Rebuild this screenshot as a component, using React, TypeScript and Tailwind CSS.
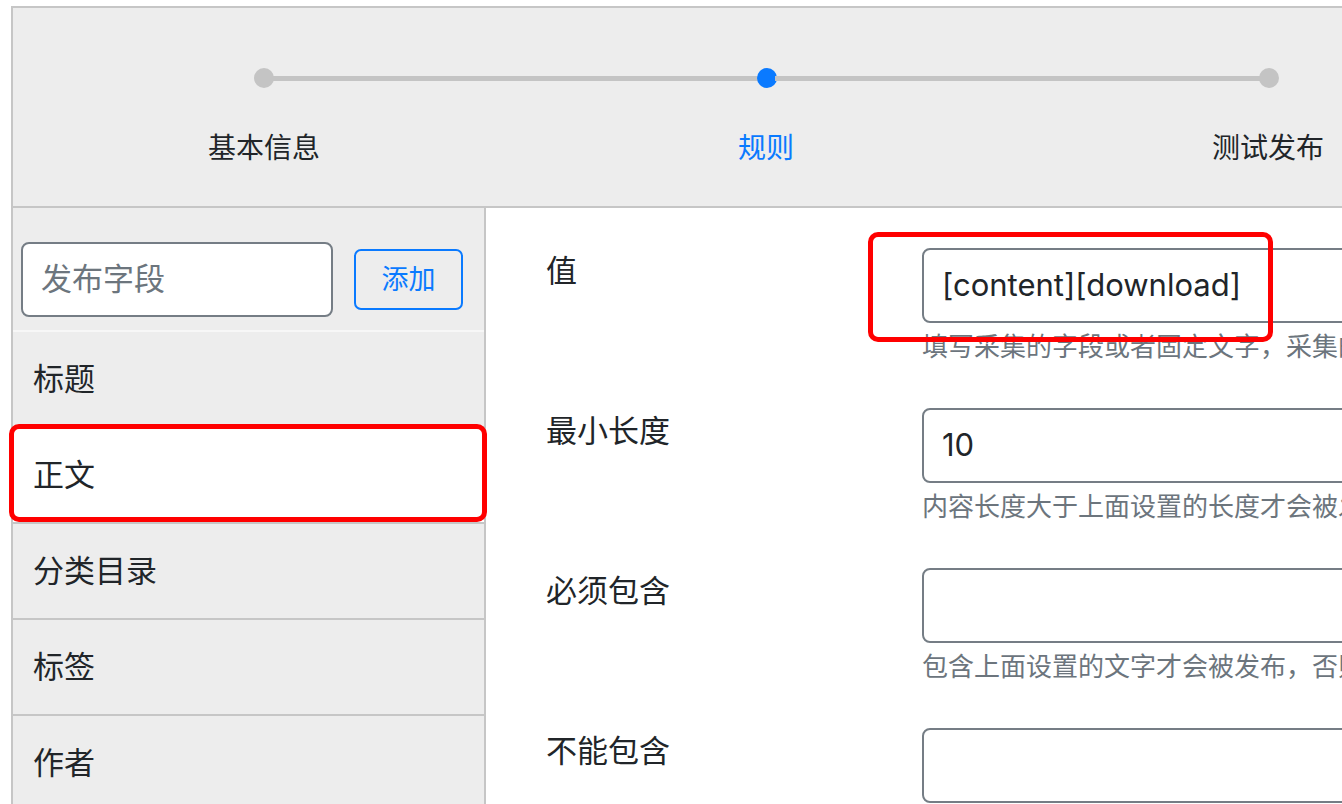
const steps = [
  { label: '基本信息', active: false },
  { label: '规则', active: true },
  { label: '测试发布', active: false },
]

const fields = ['标题', '正文', '分类目录', '标签', '作者']

const rules = [
  { label: '值', value: '[content][download]', help: '填写采集的字段或者固定文字，采集的字段需要用中括号括起来' },
  { label: '最小长度', value: '10', help: '内容长度大于上面设置的长度才会被发布，否则跳过' },
  { label: '必须包含', value: '', help: '包含上面设置的文字才会被发布，否则跳过' },
  { label: '不能包含', value: '', help: '包含上面设置的文字不会被发布' },
]

function Stepper() {
  return (
    <div className="h-[200px] border-b-2 border-[#c6c6c6] bg-[#ededed]">
      {/* Dots and track */}
      <div className="pt-[60px] ml-[241px] w-[1025px] flex items-center">
        {steps.map((s, i) => (
          <div key={s.label} className={`flex items-center ${i < steps.length - 1 ? 'flex-1' : ''}`}>
            <span
              className={`w-[20px] h-[20px] rounded-full shrink-0 ${s.active ? 'bg-[#0a7aff]' : 'bg-[#c4c4c4]'}`}
            />
            {i < steps.length - 1 && <span className="flex-1 h-[5px] bg-[#c4c4c4] -mx-[2px]" />}
          </div>
        ))}
      </div>
      {/* Labels */}
      <div className="mt-[40px] grid grid-cols-[502px_502px_502px]">
        {steps.map((s) => (
          <div
            key={s.label}
            className={`text-center text-[28px] leading-[40px] ${s.active ? 'text-[#0a7aff]' : 'text-[#212529]'}`}
          >
            {s.label}
          </div>
        ))}
      </div>
    </div>
  )
}

function Sidebar() {
  return (
    <div className="w-[473px] shrink-0 bg-[#ededed] border-r-2 border-[#c6c6c6]">
      <div className="pt-[34px] pb-[13px] pl-[8px] flex items-center border-b-2 border-[#f7f7f7]">
        <div className="w-[312px] h-[75px] rounded-[8px] border-2 border-[#757d85] bg-white flex items-center pl-[18px] text-[31px] text-[#6c757d]">
          发布字段
        </div>
        <button className="ml-[21px] w-[109px] h-[61px] rounded-[7px] border-2 border-[#0a7aff] text-[#0a7aff] text-[27px] leading-none">
          添加
        </button>
      </div>
      {fields.map((f) => (
        <div
          key={f}
          className={`h-[96px] border-b-2 border-[#c6c6c6] pl-[20px] flex items-center text-[31px] text-[#212529] ${
            f === '正文' ? 'bg-white' : ''
          }`}
        >
          {f}
        </div>
      ))}
    </div>
  )
}

function RuleForm() {
  return (
    <div className="flex-1 bg-white pl-[60px] pt-[40px]">
      {rules.map((r) => (
        <div key={r.label} className="flex mb-[43px]">
          <div className="w-[376px] shrink-0 text-[31px] leading-[46px] text-[#212529]">{r.label}</div>
          <div className="w-[700px] shrink-0">
            <div className="h-[75px] rounded-[8px] border-2 border-[#757d85] bg-white flex items-center pl-[18px] text-[31px] text-[#212529]">
              {r.value}
            </div>
            <div className="mt-[6px] text-[26px] leading-[36px] text-[#6c757d] whitespace-nowrap">{r.help}</div>
          </div>
        </div>
      ))}
    </div>
  )
}

export default function App() {
  return (
    <div className="relative w-[1342px] h-[804px] overflow-hidden bg-white font-['Inter','Noto_Sans_CJK_SC',sans-serif]">
      <div className="ml-[11px] mt-[6px] w-[1420px] border-2 border-[#c6c6c6]">
        <Stepper />
        <div className="flex h-[700px]">
          <Sidebar />
          <RuleForm />
        </div>
      </div>

      {/* Red annotation boxes */}
      <div className="absolute left-[9px] top-[424px] w-[478px] h-[98px] border-[5px] border-[#ff0000] rounded-[10px]" />
      <div className="absolute left-[868px] top-[232px] w-[405px] h-[110px] border-[5px] border-[#ff0000] rounded-[10px]" />
    </div>
  )
}
